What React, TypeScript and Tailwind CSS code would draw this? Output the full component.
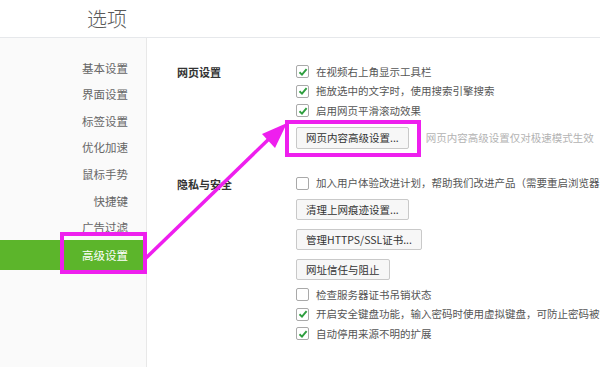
import React from 'react';

const font = { fontFamily: '"Noto Sans CJK SC", "Noto Sans", sans-serif' };

const menu = ['基本设置', '界面设置', '标签设置', '优化加速', '鼠标手势', '快捷键', '广告过滤'];

function Check({ on }: { on?: boolean }) {
  return (
    <span className="mr-[7px] flex h-[13px] w-[13px] shrink-0 items-center justify-center rounded-[2px] border border-[#a9a9a9] bg-white">
      {on && (
        <svg width="10" height="10" viewBox="0 0 10 10">
          <path d="M1.5 5.2 L4 7.6 L8.6 2.2" fill="none" stroke="#2e9e3e" strokeWidth="1.9" />
        </svg>
      )}
    </span>
  );
}

function Row({ on, children }: { on?: boolean; children: React.ReactNode }) {
  return (
    <div className="flex h-[19.5px] items-center whitespace-nowrap text-[10.5px] text-[#555]">
      <Check on={on} />
      <span>{children}</span>
    </div>
  );
}

function Btn({ children, className = '' }: { children: React.ReactNode; className?: string }) {
  return (
    <div
      className={`flex h-[21px] w-fit items-center rounded-[2px] border border-[#c9c9c9] bg-[#f7f7f7] px-[9px] text-[10.5px] text-[#333] ${className}`}
    >
      {children}
    </div>
  );
}

export default function App() {
  return (
    <div className="relative h-[367px] w-[600px] overflow-hidden bg-white" style={font}>
      <div className="flex h-[38px] items-center border-b border-[#e6e8eb] pl-[87px] text-[20px] font-light text-[#5a5a5a]">
        选项
      </div>
      <div className="flex h-[329px]">
        <div className="w-[147px] shrink-0 border-r border-[#e8e8e8] bg-[#fafafa] pt-[17px]">
          {menu.map((m) => (
            <div key={m} className="flex h-[26.6px] items-center justify-end pr-[18px] text-[11.5px] text-[#666]">
              {m}
            </div>
          ))}
          <div className="relative mt-[-1px] flex h-[30px] items-center justify-end bg-[#5cb52b] pr-[18px] text-[11.5px] text-white">
            高级设置
            <div className="absolute left-[60px] right-[-1px] top-[-8px] bottom-[-4px] border-[4px] border-[#ee1fee]" />
          </div>
        </div>
        <div className="flex-1 pl-[30px] pt-[24px]">
          <div className="flex">
            <div className="w-[119px] shrink-0 pt-[2px] text-[11px] font-bold text-[#333]">网页设置</div>
            <div>
              <Row on>在视频右上角显示工具栏</Row>
              <Row on>拖放选中的文字时，使用搜索引擎搜索</Row>
              <Row on>启用网页平滑滚动效果</Row>
              <div className="mt-[6px] flex items-center">
                <div className="relative">
                  <Btn className="h-[22px]">网页内容高级设置...</Btn>
                  <div className="absolute left-[-11px] right-[-12px] top-[-7px] bottom-[-8px] border-[4px] border-[#ee1fee]" />
                </div>
                <span className="ml-[17px] whitespace-nowrap text-[10.5px] text-[#b3b3b3]">网页内容高级设置仅对极速模式生效</span>
              </div>
            </div>
          </div>
          <div className="mt-[25px] flex">
            <div className="w-[119px] shrink-0 pt-[2px] text-[11px] font-bold text-[#333]">隐私与安全</div>
            <div>
              <Row>加入用户体验改进计划，帮助我们改进产品（需要重启浏览器）</Row>
              <Btn className="mt-[6px]">清理上网痕迹设置...</Btn>
              <Btn className="mt-[9px]">管理HTTPS/SSL证书...</Btn>
              <Btn className="mt-[9px]">网址信任与阻止</Btn>
              <div className="mt-[5px]">
                <Row>检查服务器证书吊销状态</Row>
                <Row on>开启安全键盘功能，输入密码时使用虚拟键盘，可防止密码被键盘记录</Row>
                <Row on>自动停用来源不明的扩展</Row>
              </div>
            </div>
          </div>
        </div>
      </div>
      <svg className="pointer-events-none absolute left-0 top-0" width="600" height="367">
        <line x1="146" y1="258" x2="272" y2="136" stroke="#ee1fee" strokeWidth="3.5" />
        <polygon points="287,123 275,148 262,134" fill="#ee1fee" />
      </svg>
    </div>
  );
}
